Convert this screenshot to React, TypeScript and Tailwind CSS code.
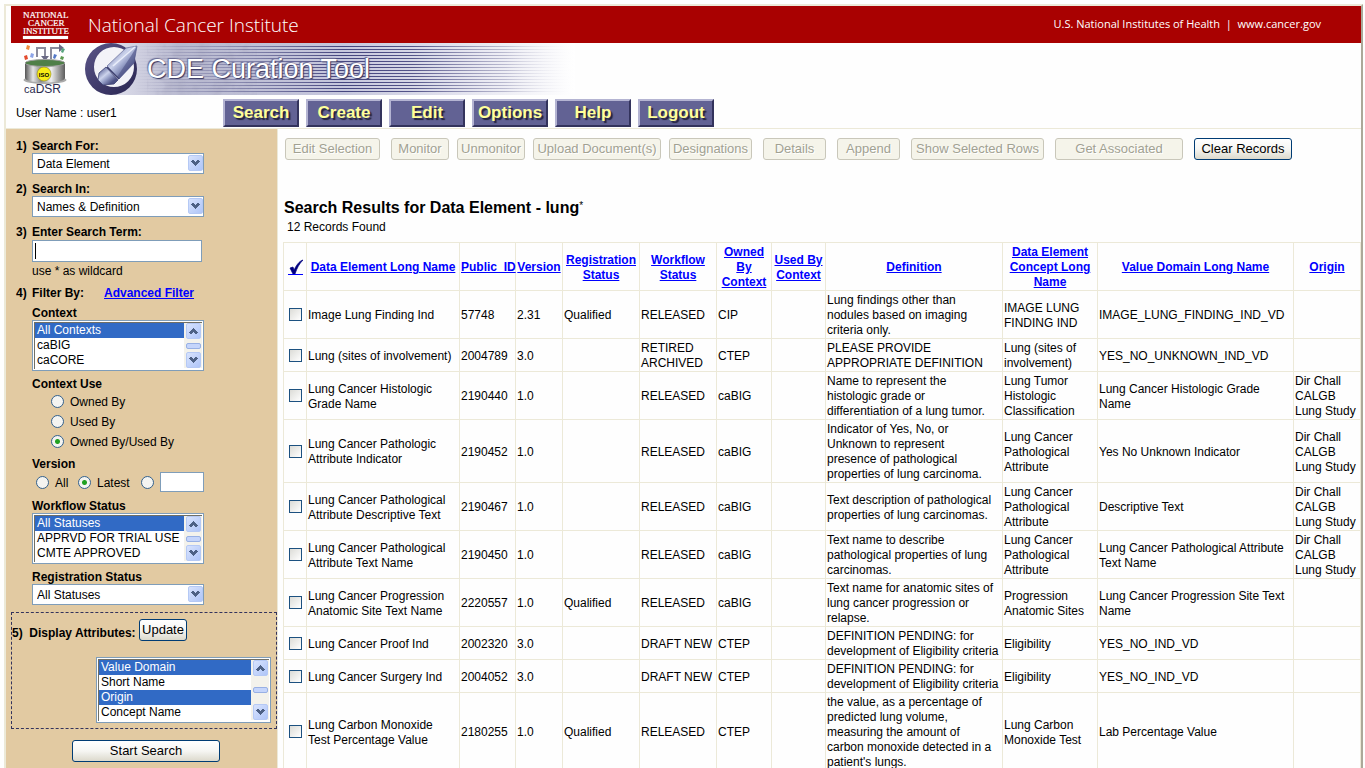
import React from "react";

const NAV = ["Search", "Create", "Edit", "Options", "Help", "Logout"];

const ACTIONS: { label: string; box: string; enabled?: boolean }[] = [
  { label: "Edit Selection", box: "w-[95px] mr-[11px]" },
  { label: "Monitor", box: "w-[58px] mr-2" },
  { label: "Unmonitor", box: "w-[68px] mr-2" },
  { label: "Upload Document(s)", box: "w-32 mr-2" },
  { label: "Designations", box: "w-[83px] mr-[11px]" },
  { label: "Details", box: "w-[63px] mr-[11px]" },
  { label: "Append", box: "w-[63px] mr-[11px]" },
  { label: "Show Selected Rows", box: "w-[133px] mr-[11px]" },
  { label: "Get Associated", box: "w-32 mr-[11px]" },
  { label: "Clear Records", box: "w-[98px]", enabled: true },
];

const COLUMNS: { title: string; width: string }[] = [
  { title: "Data Element Long Name", width: "w-[153px]" },
  { title: "Public_ID", width: "w-14" },
  { title: "Version", width: "w-[47px]" },
  { title: "Registration\nStatus", width: "w-[77px]" },
  { title: "Workflow\nStatus", width: "w-[77px]" },
  { title: "Owned\nBy\nContext", width: "w-[55px]" },
  { title: "Used By\nContext", width: "w-[54px]" },
  { title: "Definition", width: "w-[177px]" },
  { title: "Data Element\nConcept Long\nName", width: "w-[95px]" },
  { title: "Value Domain Long Name", width: "" },
  { title: "Origin", width: "w-[67px]" },
];

const TRIAL = "Dir Chall\nCALGB\nLung Study";

const ROWS: string[][] = [
  ["Image Lung Finding Ind", "57748", "2.31", "Qualified", "RELEASED", "CIP", "", "Lung findings other than\nnodules based on imaging\ncriteria only.", "IMAGE LUNG\nFINDING IND", "IMAGE_LUNG_FINDING_IND_VD", ""],
  ["Lung (sites of involvement)", "2004789", "3.0", "", "RETIRED\nARCHIVED", "CTEP", "", "PLEASE PROVIDE\nAPPROPRIATE DEFINITION", "Lung (sites of\ninvolvement)", "YES_NO_UNKNOWN_IND_VD", ""],
  ["Lung Cancer Histologic\nGrade Name", "2190440", "1.0", "", "RELEASED", "caBIG", "", "Name to represent the\nhistologic grade or\ndifferentiation of a lung tumor.", "Lung Tumor\nHistologic\nClassification", "Lung Cancer Histologic Grade\nName", TRIAL],
  ["Lung Cancer Pathologic\nAttribute Indicator", "2190452", "1.0", "", "RELEASED", "caBIG", "", "Indicator of Yes, No, or\nUnknown to represent\npresence of pathological\nproperties of lung carcinoma.", "Lung Cancer\nPathological\nAttribute", "Yes No Unknown Indicator", TRIAL],
  ["Lung Cancer Pathological\nAttribute Descriptive Text", "2190467", "1.0", "", "RELEASED", "caBIG", "", "Text description of pathological\nproperties of lung carcinomas.", "Lung Cancer\nPathological\nAttribute", "Descriptive Text", TRIAL],
  ["Lung Cancer Pathological\nAttribute Text Name", "2190450", "1.0", "", "RELEASED", "caBIG", "", "Text name to describe\npathological properties of lung\ncarcinomas.", "Lung Cancer\nPathological\nAttribute", "Lung Cancer Pathological Attribute\nText Name", TRIAL],
  ["Lung Cancer Progression\nAnatomic Site Text Name", "2220557", "1.0", "Qualified", "RELEASED", "caBIG", "", "Text name for anatomic sites of\nlung cancer progression or\nrelapse.", "Progression\nAnatomic Sites", "Lung Cancer Progression Site Text\nName", ""],
  ["Lung Cancer Proof Ind", "2002320", "3.0", "", "DRAFT NEW", "CTEP", "", "DEFINITION PENDING: for\ndevelopment of Eligibility criteria", "Eligibility", "YES_NO_IND_VD", ""],
  ["Lung Cancer Surgery Ind", "2004052", "3.0", "", "DRAFT NEW", "CTEP", "", "DEFINITION PENDING: for\ndevelopment of Eligibility criteria", "Eligibility", "YES_NO_IND_VD", ""],
  ["Lung Carbon Monoxide\nTest Percentage Value", "2180255", "1.0", "Qualified", "RELEASED", "CTEP", "", "the value, as a percentage of\npredicted lung volume,\nmeasuring the amount of\ncarbon monoxide detected in a\npatient's lungs.", "Lung Carbon\nMonoxide Test", "Lab Percentage Value", ""],
];

function ArrowTile({ up = false }: { up?: boolean }) {
  return (
    <span className="flex h-4 w-[15px] items-center justify-center rounded-[2px] border border-[#b5c9f5] bg-linear-to-br from-[#d8e3fd] to-[#afc5f8]">
      <svg viewBox="0 0 9 6" className={up ? "h-1.5 w-[9px] rotate-180" : "h-1.5 w-[9px]"} shapeRendering="crispEdges">
        <path d="M0 1h1V0h2v1h1v1h1V1h1V0h2v1h1v1H8v1H7v1H6v1H5v1H4V5H3V4H2V3H1V2H0Z" fill="#4d6185" />
      </svg>
    </span>
  );
}

function DropDown({ id, value }: { id: string; value: string }) {
  return (
    <div className="relative w-[172px]">
      <select id={id} className="block h-[21px] w-full appearance-none border border-[#7f9db9] bg-white px-1 pt-px text-xs leading-[18px] outline-none">
        <option>{value}</option>
      </select>
      <span className="pointer-events-none absolute right-px top-0.5 flex">
        <ArrowTile />
      </span>
    </div>
  );
}

function ListBox({ id, options, selected, box }: { id: string; options: string[]; selected: string[]; box: string }) {
  return (
    <div className={`relative border border-[#7f9db9] bg-white p-px ${box}`}>
      <select
        id={id}
        multiple
        size={options.length}
        defaultValue={selected}
        className="block h-full w-full overflow-hidden border-l border-t border-[#716f64] bg-white bg-none p-0 text-xs leading-[15px] outline-none [scrollbar-width:none]"
      >
        {options.map((o) => (
          <option
            key={o}
            value={o}
            className="h-[15px] min-h-0 p-0 px-0.5 leading-[15px] checked:bg-[linear-gradient(#316ac5,#316ac5)] checked:text-white checked:[-webkit-text-fill-color:white]"
          >
            {o}
          </option>
        ))}
      </select>
      <span className="pointer-events-none absolute bottom-0.5 right-px top-0.5 flex w-[18px] flex-col items-center justify-between bg-[#f3f2ec]">
        <ArrowTile up />
        <span className="h-1.5 w-[15px] rounded-[2px] border border-[#98b0e4] bg-[#c5d5fb]" />
        <ArrowTile />
      </span>
    </div>
  );
}

function Radio({ name, id, checked = false }: { name: string; id: string; checked?: boolean }) {
  return (
    <input
      type="radio"
      name={name}
      id={id}
      aria-label={id}
      defaultChecked={checked}
      className="h-[13px] w-[13px] shrink-0 appearance-none rounded-full border border-[#33608c] bg-[#f4f4f1] checked:bg-[radial-gradient(circle,#21a121_0_2px,#f4f4f1_3px)]"
    />
  );
}

function InstituteLogo() {
  return (
    <svg viewBox="0 0 50 34" className="h-[34px] w-[50px]" fill="#fff" stroke="#fff" strokeWidth=".2" fontFamily="Liberation Serif, serif" fontSize="9">
      <text x="1" y="10">NATIONAL</text>
      <text x="6" y="18">CANCER</text>
      <text x="1" y="26">INSTITUTE</text>
      <rect x="1" y="28" width="45" height="3" />
    </svg>
  );
}

function CadsrLogo() {
  return (
    <svg viewBox="0 0 46 55" className="h-[55px] w-[46px]">
      <defs>
        <linearGradient id="drum" x1="0" x2="1">
          <stop offset="0" stopColor="#555" />
          <stop offset=".2" stopColor="#e4e4e4" />
          <stop offset=".4" stopColor="#8a8a8a" />
          <stop offset=".65" stopColor="#f0f0f0" />
          <stop offset="1" stopColor="#5c5c5c" />
        </linearGradient>
      </defs>
      <path d="M15 14V5h8v10M29 16V5h9" fill="none" stroke="#8b8b9c" strokeWidth="2" />
      <path d="M37 1l5 4-5 4zM19 13l4 5 4-5z" fill="#6a6a85" />
      <path d="M5 2l3 1-1 4-3-1z" fill="#f08a3c" />
      <path d="M40 5l3 1-2 4-2-1z" fill="#5aa580" />
      <path d="M2 13l3-1 1 4-3 1z" fill="#e34b2d" />
      <path d="M9 10l3 1-1 4-3-1z" fill="#8ea5e8" />
      <path d="M32 11l3 1-2 4-2-1z" fill="#5579c8" />
      <path d="M39 13l3 1-1 3-3-1z" fill="#5c9950" />
      <ellipse cx="23" cy="37" rx="21.500" ry="4" fill="#aaa" />
      <path d="M3 20v15c0 6 40 6 40 0V20z" fill="url(#drum)" />
      <ellipse cx="23" cy="20" rx="20" ry="3.500" fill="#4f7f48" stroke="#a0a0a0" />
      <circle cx="22" cy="31" r="7" fill="#f8ee16" stroke="#8c8516" strokeWidth=".6" />
      <text x="22" y="33.500" textAnchor="middle" fontSize="6" fontWeight="bold" fontFamily="Liberation Sans, sans-serif">ISO</text>
      <text x="2" y="50" fontSize="12" fill="#2b2b50" fontFamily="Liberation Sans, sans-serif">
        <tspan fontSize="11">ca</tspan>DSR
      </text>
    </svg>
  );
}

function BannerArt() {
  return (
    <svg viewBox="0 0 490 52" className="h-[52px] w-[490px]">
      <defs>
        <linearGradient id="sky" x1="0" x2="1">
          <stop offset="0" stopColor="#dedeeb" />
          <stop offset=".15" stopColor="#b9bad0" />
          <stop offset=".5" stopColor="#c6c7dd" />
          <stop offset=".8" stopColor="#e9e9f2" />
          <stop offset="1" stopColor="#fff" />
        </linearGradient>
        <linearGradient id="rule" x1="0" x2="1">
          <stop offset=".05" stopColor="#45457f" stopOpacity="0" />
          <stop offset=".3" stopColor="#45457f" stopOpacity=".5" />
          <stop offset=".5" stopColor="#45457f" />
          <stop offset=".65" stopColor="#45457f" stopOpacity=".9" />
          <stop offset=".85" stopColor="#8888ac" stopOpacity=".5" />
          <stop offset="1" stopColor="#fff" stopOpacity="0" />
        </linearGradient>
        <linearGradient id="barrel" x1="0.2" y1="0.2" x2=".75" y2=".8">
          <stop offset="0" stopColor="#8088b4" />
          <stop offset=".35" stopColor="#ccd3ec" />
          <stop offset=".6" stopColor="#9aa3ca" />
          <stop offset="1" stopColor="#4b5084" />
        </linearGradient>
        <linearGradient id="ring" x1="0" y1="0" x2="1" y2="1">
          <stop offset="0" stopColor="#5c5689" />
          <stop offset="1" stopColor="#282450" />
        </linearGradient>
        <filter id="cloud" x="0" y="0" width="100%" height="100%">
          <feTurbulence type="fractalNoise" baseFrequency=".08" numOctaves="3" seed="4" />
          <feColorMatrix values="0 0 0 0 .42  0 0 0 0 .42  0 0 0 0 .55  2 0 0 0 -.8" />
        </filter>
      </defs>
      <rect x="26" width="464" height="52" fill="url(#sky)" />
      <rect x="62" width="110" height="52" filter="url(#cloud)" opacity=".6" />
      {Array.from({ length: 16 }, (_, i) => (
        <rect key={i} x="26" y={3 + i * 3} width="464" height="1" fill="url(#rule)" />
      ))}
      <circle cx="26" cy="26" r="23" fill="#f3f3f8" />
      <path d="M26 0a26 26 0 1 0 26 26A26 26 0 0 0 26 0ZM29 4a20 20 0 1 1-20 20A20 20 0 0 1 29 4Z" fill="url(#ring)" fillRule="evenodd" />
      <path d="M52 3 41 5 22 23 34 36 49 20Z" fill="url(#barrel)" stroke="#545a8b" strokeWidth=".6" />
      <path d="M52 3 46 13 32 34 34 36 49 20Z" fill="#4c5286" opacity=".6" />
      <path d="M21 24 33 37 29 41 18 42 13 37 14 30Z" fill="url(#barrel)" stroke="#3f4375" strokeWidth=".8" />
      <path d="M22 24 34 36" stroke="#3d4070" strokeWidth="1.500" />
      <path d="M50 4 28 23" stroke="#e9edfa" strokeWidth="1.500" />
    </svg>
  );
}

function Header() {
  return (
    <header className="border-b border-[#ece9d8]">
      <div className="ml-[5px] flex h-[37px] items-center bg-[#a90101] pl-[11px] pr-10 text-white">
        <InstituteLogo />
        <span className="ml-4 font-['Open_Sans',sans-serif] text-[19px] font-light leading-6">National Cancer Institute</span>
        <span className="ml-auto font-['Open_Sans',sans-serif] text-[11px]">
          U.S. National Institutes of Health&nbsp; |&nbsp; www.cancer.gov
        </span>
      </div>
      <div className="flex h-[52px] items-start pl-4">
        <CadsrLogo />
        <div className="relative ml-[17px]">
          <BannerArt />
          <h1 className="absolute left-[62px] top-2 whitespace-nowrap text-[27px] leading-9 text-white [text-shadow:1px_1px_1px_#34345f,-1px_-1px_1px_#6b6b92]">
            CDE Curation Tool
          </h1>
        </div>
      </div>
      <div className="flex pb-px pl-2.5 pt-1">
        <span className="w-[207px] self-center text-xs">User Name : user1</span>
        <nav className="flex gap-[7px]">
          {NAV.map((n) => (
            <button
              key={n}
              type="button"
              className="h-7 w-[76px] border-2 border-b-[#33335c] border-l-[#b4b4d2] border-r-[#33335c] border-t-[#b4b4d2] bg-[#626294] text-[17px] font-bold leading-6 text-[#ffff99] [text-shadow:2px_2px_1px_#22223c]"
            >
              {n}
            </button>
          ))}
        </nav>
      </div>
    </header>
  );
}

function Step({ n, children, htmlFor }: { n?: string; children: React.ReactNode; htmlFor?: string }) {
  return (
    <div className="flex h-[15px] pt-px font-bold">
      <span className="w-4">{n}</span>
      <label htmlFor={htmlFor}>{children}</label>
    </div>
  );
}

const RAISED = "rounded-[3px] border border-[#003c74] bg-linear-to-b from-white via-[#f6f6f3] to-[#dcd9cc] text-[13px] leading-[18px]";

function Sidebar() {
  return (
    <aside className="w-[272px] shrink-0 border-r border-[#ece9d8] bg-[#e2caa2] pt-[9px] text-xs leading-[15px]">
      <div className="pl-2.5">
        <Step n="1)" htmlFor="search-for">Search For:</Step>
        <div className="pl-4"><DropDown id="search-for" value="Data Element" /></div>
        <div className="mt-[7px]"><Step n="2)" htmlFor="search-in">Search In:</Step></div>
        <div className="pl-4"><DropDown id="search-in" value="Names & Definition" /></div>
        <div className="mt-[7px]"><Step n="3)" htmlFor="term">Enter Search Term:</Step></div>
        <div className="relative pl-4 pt-px">
          <input id="term" type="text" className="block h-[22px] w-[170px] border border-[#7f9db9] bg-white px-1 outline-none" />
          <span className="absolute left-[19px] top-1 h-4 w-px bg-black" />
          <span className="mt-0.5 block">use * as wildcard</span>
        </div>
        <div className="mt-1.5 flex">
          <Step n="4)">Filter By:</Step>
          <a href="#advanced" className="ml-5 pt-px font-bold text-[#0000ff] underline">Advanced Filter</a>
        </div>
        <div className="mt-1"><Step htmlFor="context">Context</Step></div>
        <div className="pl-4">
          <ListBox id="context" options={["All Contexts", "caBIG", "caCORE"]} selected={["All Contexts"]} box="h-[51px] w-[172px]" />
        </div>
        <div className="mt-[5px]"><Step>Context Use</Step></div>
        <div className="pl-[35px]">
          {["Owned By", "Used By", "Owned By/Used By"].map((t) => (
            <div key={t} className="flex h-5 items-center gap-1.5">
              <Radio name="use" id={t} checked={t === "Owned By/Used By"} />
              <label htmlFor={t} className="pt-0.5">{t}</label>
            </div>
          ))}
        </div>
        <div className="mt-[5px]"><Step>Version</Step></div>
        <div className="flex items-center pl-5 pt-px">
          <Radio name="version" id="All" />
          <label htmlFor="All" className="ml-1.5 w-[23px] pt-0.5">All</label>
          <Radio name="version" id="Latest" checked />
          <label htmlFor="Latest" className="ml-1.5 w-11 pt-0.5">Latest</label>
          <Radio name="version" id="Specific version" />
          <input type="text" aria-label="Version number" className="ml-1.5 h-5 w-11 border border-[#7f9db9] bg-white px-1" />
        </div>
        <div className="mt-1.5"><Step htmlFor="workflow">Workflow Status</Step></div>
        <div className="pl-4">
          <ListBox id="workflow" options={["All Statuses", "APPRVD FOR TRIAL USE", "CMTE APPROVED"]} selected={["All Statuses"]} box="h-[51px] w-[172px]" />
        </div>
        <div className="mt-[5px]"><Step htmlFor="registration">Registration Status</Step></div>
        <div className="pl-4"><DropDown id="registration" value="All Statuses" /></div>
      </div>
      <div className="ml-[5px] mt-[7px] h-[117px] border border-dashed border-[#33335c] pt-1.5">
        <div className="flex items-center">
          <label htmlFor="attributes" className="w-[127px] whitespace-nowrap pt-1.5 font-bold">
            5)&nbsp; Display Attributes:
          </label>
          <button type="button" className={`h-[22px] w-12 ${RAISED}`}>Update</button>
        </div>
        <div className="mt-4 pl-[84px]">
          <ListBox id="attributes" options={["Value Domain", "Short Name", "Origin", "Concept Name"]} selected={["Value Domain", "Origin"]} box="h-[66px] w-[175px]" />
        </div>
      </div>
      <button type="button" className={`ml-[66px] mt-[11px] h-[22px] w-[148px] ${RAISED}`}>Start Search</button>
    </aside>
  );
}

function Results() {
  return (
    <table className="w-full table-fixed border-collapse text-xs leading-[15px]">
      <thead>
        <tr className="h-12">
          <th className="w-[23px] border border-[#ece9d8] p-px">
            <a href="#all" aria-label="Select all" className="mx-auto block w-[15px] border-b border-[#0000ff]">
              <svg viewBox="0 0 15 15" className="h-[15px] w-[15px]">
                <path d="M2 9l3-1 1 3C8 7 11 2 15 1 11 5 9 9 7 15H5Z" fill="#000080" stroke="#000080" strokeWidth=".7" />
              </svg>
            </a>
          </th>
          {COLUMNS.map((c) => (
            <th key={c.title} className={`whitespace-pre border border-[#ece9d8] px-px pb-0 pt-0.5 ${c.width}`}>
              <a href="#sort" className="text-[#0000ff] underline">{c.title}</a>
            </th>
          ))}
        </tr>
      </thead>
      <tbody>
        {ROWS.map((r) => (
          <tr key={r[1]}>
            <td className="border border-[#ece9d8] p-px">
              <input
                type="checkbox"
                aria-label={r[0]}
                className="mx-auto block h-[13px] w-[13px] appearance-none border border-[#1c5180] bg-linear-to-br from-[#dcdcd7] to-white"
              />
            </td>
            {r.map((text, i) => (
              <td key={i} className="whitespace-pre border border-[#ece9d8] px-px pb-0 pt-0.5">{text}</td>
            ))}
          </tr>
        ))}
      </tbody>
    </table>
  );
}

export default function App() {
  return (
    <div className="h-screen overflow-hidden bg-[#fefefe] pl-1 pr-0.5 pt-1 font-['Liberation_Sans',Arial,sans-serif] text-black">
      <div className="flex min-h-full flex-col border-l-2 border-r-2 border-t-2 border-l-[#ece9d8] border-r-[#aca899] border-t-[#ece9d8]">
        <Header />
        <div className="flex flex-1">
          <Sidebar />
          <main className="min-w-0 flex-1 pl-[5px] pt-[9px]">
            <div className="flex pl-0.5">
              {ACTIONS.map((a) => (
                <button
                  key={a.label}
                  type="button"
                  disabled={!a.enabled}
                  className={`h-[22px] shrink-0 whitespace-nowrap ${a.box} ${
                    a.enabled
                      ? RAISED
                      : "rounded-[3px] border border-[#c9c7ba] bg-[#f5f4ea] text-[13px] leading-[18px] text-[#a1a192] [text-shadow:1px_1px_0_#fff]"
                  }`}
                >
                  {a.label}
                </button>
              ))}
            </div>
            <h2 className="mt-9 flex pl-px text-base font-bold leading-6">
              Search Results for Data Element - lung<span className="text-[10px] font-normal leading-5">*</span>
            </h2>
            <p className="mb-[7px] pl-1 text-xs leading-[15px]">12 Records Found</p>
            <Results />
          </main>
        </div>
      </div>
    </div>
  );
}
